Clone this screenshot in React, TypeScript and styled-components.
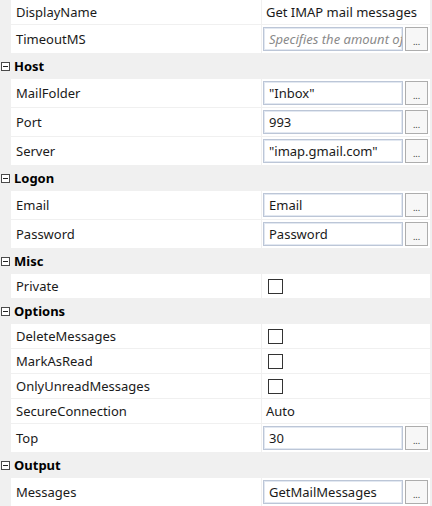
import React from 'react';
import styled, { createGlobalStyle } from 'styled-components';

const GlobalStyle = createGlobalStyle`
  html, body {
    margin: 0;
    padding: 0;
    background: #f0f0f0;
  }
  body {
    font-family: "Noto Sans", "Open Sans", sans-serif;
    font-size: 13px;
    color: #1a1a1a;
  }
`;

const Grid = styled.div`
  width: 430px;
  padding-right: 2px;
  display: flex;
  flex-direction: column;
  gap: 1px;
  background-color: #f0f0f0;
`;

const Row = styled.div<{ $h: number }>`
  display: grid;
  grid-template-columns: 10px 250px 1fr;
  column-gap: 1px;
  height: ${(p) => p.$h}px;
`;

const Gutter = styled.div`
  display: flex;
  align-items: center;
  justify-content: flex-start;
`;

const NameCell = styled.div`
  background-color: #ffffff;
  display: flex;
  align-items: center;
  padding-left: 5px;
  white-space: nowrap;
`;

const ValueCell = styled.div`
  background-color: #ffffff;
  display: flex;
  align-items: center;
  padding: 0 2px 0 1px;
  gap: 2px;
  min-width: 0;
`;

const HeaderLabel = styled.div`
  grid-column: 2 / 4;
  display: flex;
  align-items: center;
  padding-left: 3px;
  font-weight: 700;
  color: #000000;
`;

const Expander = styled.span`
  position: relative;
  width: 7px;
  height: 7px;
  margin-left: 1px;
  border: 1px solid #4a4a4a;
  background: #ffffff;
  &::after {
    content: '';
    position: absolute;
    left: 1px;
    right: 1px;
    top: 3px;
    height: 1px;
    background: #222222;
  }
`;

const PlainValue = styled.span`
  padding-left: 3px;
  white-space: nowrap;
`;

const TextBox = styled.div<{ $placeholder?: boolean }>`
  flex: 1;
  min-width: 0;
  height: 24px;
  box-sizing: border-box;
  border: 1px solid #bcc6d7;
  box-shadow: inset 0 0 0 1px #e2e8f1;
  display: flex;
  align-items: center;
  padding-left: 5px;
  overflow: hidden;
  white-space: nowrap;
  font-style: ${(p) => (p.$placeholder ? 'italic' : 'normal')};
  color: ${(p) => (p.$placeholder ? '#8a8a8a' : '#1a1a1a')};
`;

const DotsButton = styled.button`
  width: 23px;
  height: 24px;
  flex: none;
  box-sizing: border-box;
  border: 1px solid #adadad;
  background: #f7f7f7;
  padding: 0 0 4px;
  font: inherit;
  font-size: 9px;
  line-height: 1;
  color: #333;
  display: flex;
  align-items: flex-end;
  justify-content: center;
`;

const CheckBox = styled.span`
  width: 13px;
  height: 13px;
  margin-left: 5px;
  border: 1px solid #333333;
  background: #ffffff;
`;

type Item =
  | { kind: 'header'; label: string }
  | { kind: 'text'; label: string; value: string }
  | { kind: 'edit'; label: string; value: string; placeholder?: boolean }
  | { kind: 'check'; label: string };

const items: Item[] = [
  { kind: 'text', label: 'DisplayName', value: 'Get IMAP mail messages' },
  { kind: 'edit', label: 'TimeoutMS', value: 'Specifies the amount of time', placeholder: true },
  { kind: 'header', label: 'Host' },
  { kind: 'edit', label: 'MailFolder', value: '"Inbox"' },
  { kind: 'edit', label: 'Port', value: '993' },
  { kind: 'edit', label: 'Server', value: '"imap.gmail.com"' },
  { kind: 'header', label: 'Logon' },
  { kind: 'edit', label: 'Email', value: 'Email' },
  { kind: 'edit', label: 'Password', value: 'Password' },
  { kind: 'header', label: 'Misc' },
  { kind: 'check', label: 'Private' },
  { kind: 'header', label: 'Options' },
  { kind: 'check', label: 'DeleteMessages' },
  { kind: 'check', label: 'MarkAsRead' },
  { kind: 'check', label: 'OnlyUnreadMessages' },
  { kind: 'text', label: 'SecureConnection', value: 'Auto' },
  { kind: 'edit', label: 'Top', value: '30' },
  { kind: 'header', label: 'Output' },
  { kind: 'edit', label: 'Messages', value: 'GetMailMessages' },
];

const PropertyRow: React.FC<{ item: Item }> = ({ item }) => {
  if (item.kind === 'header') {
    return (
      <Row $h={24}>
        <Gutter>
          <Expander />
        </Gutter>
        <HeaderLabel>{item.label}</HeaderLabel>
      </Row>
    );
  }

  return (
    <Row $h={item.kind === 'edit' ? 28 : 24}>
      <Gutter />
      <NameCell>{item.label}</NameCell>
      <ValueCell>
        {item.kind === 'text' && <PlainValue>{item.value}</PlainValue>}
        {item.kind === 'check' && <CheckBox />}
        {item.kind === 'edit' && (
          <>
            <TextBox $placeholder={item.placeholder}>{item.value}</TextBox>
            <DotsButton>...</DotsButton>
          </>
        )}
      </ValueCell>
    </Row>
  );
};

const App: React.FC = () => (
  <>
    <GlobalStyle />
    <Grid>
      {items.map((item) => (
        <PropertyRow key={item.label} item={item} />
      ))}
    </Grid>
  </>
);

export default App;
